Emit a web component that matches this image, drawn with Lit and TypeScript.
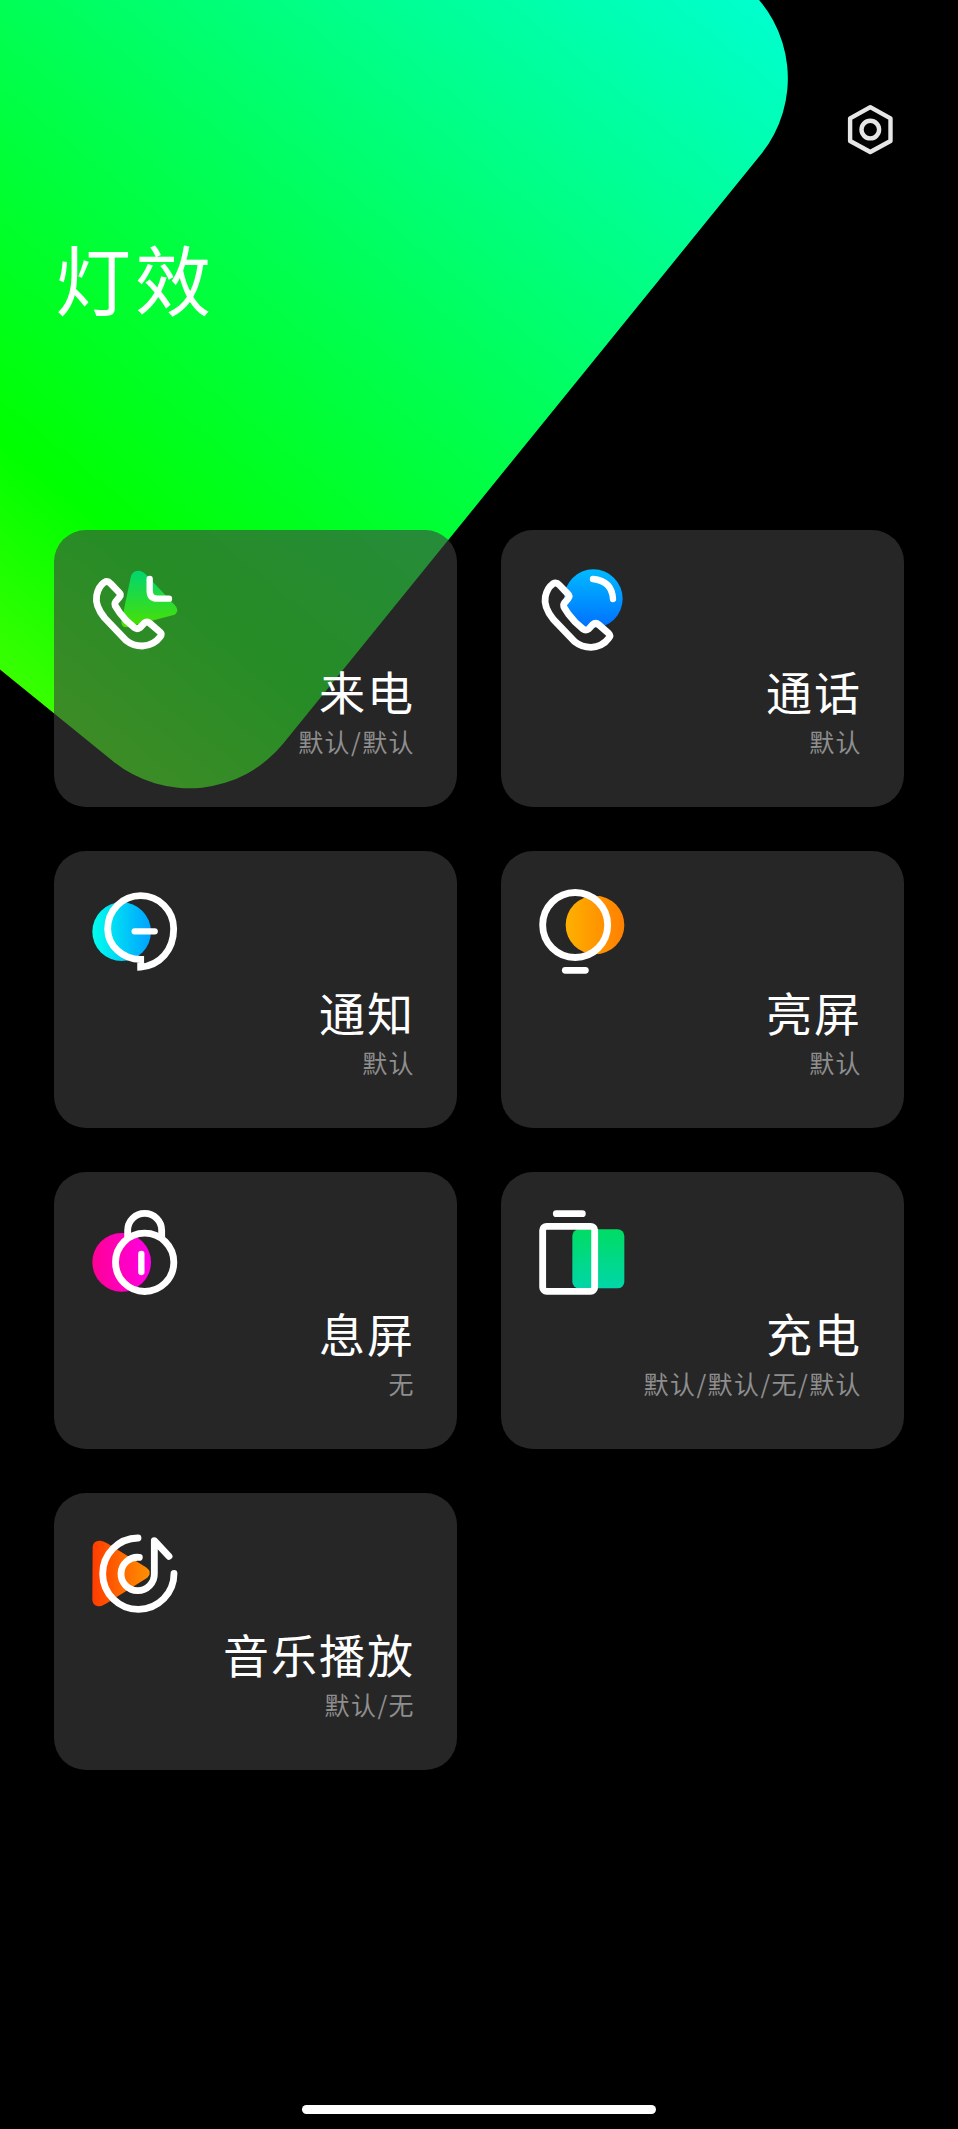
import { LitElement, html, svg, css } from "lit";
import { customElement, property } from "lit/decorators.js";

const phone = (dx: number, dy: number) => svg`
  <g transform="translate(${dx} ${dy})">
    <path class="line" d="M73 67 Q83 61 92 71 L116 96 Q125 104 118 112 L107 125 Q102 132 108 141 L119 158 Q137 183 163 203 Q171 209 180 203 L192 190 Q201 182 210 190 L240 216 Q247 223 240 231 Q222 256 187 258 Q159 258 138 241 L74 174 Q44 137 50 106 Q55 80 73 67 Z"/>
  </g>`;

const icons: Record<string, unknown> = {
  incoming: svg`<svg viewBox="0 0 330 300">
    <defs><linearGradient id="g" x1="0" y1="0" x2="0" y2="1"><stop offset="0" stop-color="#00d670"/><stop offset="1" stop-color="#4be000"/></linearGradient></defs>
    <path fill="url(#g)" d="M153 48 Q158 33 174 32 Q187 32 197 43 L285 136 Q292 144 292 151 Q290 164 278 166 L140 202 Q124 203 124 186 Z"/>
    ${phone(0, 0)}
    <path class="line thin" d="M209 57 V92 Q209 116 233 116 H267"/></svg>`,
  talking: svg`<svg viewBox="-9 0 330 300">
    <defs><linearGradient id="g" x1="0" y1="0" x2="0" y2="1"><stop offset="0" stop-color="#00baff"/><stop offset="1" stop-color="#0070ff"/></linearGradient></defs>
    <circle cx="190" cy="116" r="88" fill="url(#g)"/>
    ${phone(-4, 4)}
    <path class="line thin" d="M189 57 Q246 63 249 117"/></svg>`,
  notice: svg`<svg viewBox="0 3 330 300">
    <defs><linearGradient id="g"><stop offset="0" stop-color="#00ffee"/><stop offset="1" stop-color="#00a2ff"/></linearGradient></defs>
    <circle cx="125" cy="155" r="88" fill="url(#g)"/>
    <path class="line sharp" d="M182 238 C127 238 83 196 83 146 A99 99 0 0 1 281 146 C281 210 240 256 182 261 Z"/>
    <path class="line thin" d="M164 154 H224"/></svg>`,
  screenOn: svg`<svg viewBox="-9 3 330 300">
    <defs><linearGradient id="g"><stop offset="0" stop-color="#ffb000"/><stop offset="1" stop-color="#ff8000"/></linearGradient></defs>
    <circle cx="195" cy="135" r="88" fill="url(#g)"/>
    <circle class="line" cx="135.5" cy="135" r="97.5"/>
    <path class="line" d="M106 271 H166"/></svg>`,
  screenOff: svg`<svg viewBox="0 6 330 300">
    <defs><linearGradient id="g"><stop offset="0" stop-color="#ff0095"/><stop offset="1" stop-color="#ff00e6"/></linearGradient></defs>
    <circle cx="125" cy="187" r="88" fill="url(#g)"/>
    <circle class="line" cx="194" cy="187" r="87.5"/>
    <path class="line" d="M143 112 V91 A51 51 0 0 1 245 91 V112"/>
    <path class="line thin" d="M184 162 V216"/></svg>`,
  charge: svg`<svg viewBox="-9 6 330 300">
    <defs><linearGradient id="g" x1="0" y1="0" x2="0" y2="1"><stop offset="0" stop-color="#00dc64"/><stop offset="1" stop-color="#00d6a8"/></linearGradient></defs>
    <rect x="127" y="88" width="156" height="177" rx="20" fill="url(#g)"/>
    <rect class="line" x="38" y="79" width="156" height="195" rx="12"/>
    <path class="line" d="M79 41 H157"/></svg>`,
  music: svg`<svg viewBox="0 9 330 300">
    <defs><linearGradient id="g"><stop offset="0" stop-color="#ff3c00"/><stop offset="1" stop-color="#ff9100"/></linearGradient></defs>
    <path fill="url(#g)" d="M38 80 Q40 61 60 62 Q70 63 80 69 L198 142 Q219 157 202 173 L80 250 Q65 260 54 259 Q38 256 37 240 Z"/>
    <path class="line" d="M174 54 A107 107 0 1 0 282 160"/>
    <path class="line" d="M178 112 A50 50 0 1 0 223 160 V62 L267 109"/></svg>`,
};

@customElement("effect-card")
export class EffectCard extends LitElement {
  @property() icon = "";
  @property() name = "";
  @property() value = "";

  static styles = css`
    :host {
      display: flex;
      flex-direction: column;
      box-sizing: border-box;
      height: 277px;
      padding: 30px 42px 0 26px;
      border-radius: 32px;
      background: rgba(63, 63, 63, 0.6);
    }
    .icon { width: 110px; height: 100px; }
    .icon svg { display: block; width: 110px; height: 100px; overflow: visible; }
    .line {
      fill: none;
      stroke: #fff;
      stroke-width: 20.5;
      stroke-linecap: round;
      stroke-linejoin: round;
    }
    .thin { stroke-width: 19; }
    .sharp { stroke-linejoin: miter; }
    .name, .value { text-align: right; white-space: nowrap; }
    .name {
      margin-top: -2px;
      font-size: 46px;
      line-height: 64px;
      letter-spacing: 2px;
      color: #fff;
    }
    .value {
      margin-top: 3px;
      font-size: 25px;
      line-height: 32px;
      letter-spacing: 1.4px;
      color: #8e8e8e;
    }
  `;

  render() {
    return html`
      <div class="icon">${icons[this.icon]}</div>
      <div class="name">${this.name}</div>
      <div class="value">${this.value}</div>
    `;
  }
}

@customElement("app-root")
export class AppRoot extends LitElement {
  static styles = css`
    :host {
      display: flex;
      flex-direction: column;
      position: relative;
      box-sizing: border-box;
      height: 2129px;
      overflow: hidden;
      background: #000;
      color: #fff;
      font-family: "Noto Sans CJK SC", sans-serif;
      font-weight: 400;
    }
    .glow { position: absolute; left: 0; top: 0; }
    .bar {
      position: relative;
      display: flex;
      justify-content: flex-end;
      padding: 100px 58px 0 0;
      height: 60px;
    }
    .title {
      position: relative;
      margin: 0;
      padding: 61px 0 0 55px;
      height: 306px;
      font-size: 76px;
      line-height: 112px;
      font-weight: 400;
      letter-spacing: 4px;
      box-sizing: border-box;
    }
    .grid {
      position: relative;
      display: grid;
      grid-template-columns: 403px 403px;
      gap: 44px;
      margin: 64px 0 0 54px;
    }
    .home {
      width: 354px;
      height: 9px;
      margin: auto auto 15px 302px;
      border-radius: 5px;
      background: #fff;
    }
  `;

  private cards = [
    ["incoming", "来电", "默认/默认"],
    ["talking", "通话", "默认"],
    ["notice", "通知", "默认"],
    ["screenOn", "亮屏", "默认"],
    ["screenOff", "息屏", "无"],
    ["charge", "充电", "默认/默认/无/默认"],
    ["music", "音乐播放", "默认/无"],
  ];

  render() {
    return html`
      <svg class="glow" width="958" height="820" viewBox="0 0 958 820">
        <defs>
          <linearGradient id="glow" x1="0" y1="0" x2="0" y2="1">
            <stop offset="0" stop-color="#00ffce" />
            <stop offset="0.82" stop-color="#00ff00" />
            <stop offset="1" stop-color="#38ff00" />
          </linearGradient>
        </defs>
        <rect x="-1000" y="-481" width="1121" height="1000" rx="121" fill="url(#glow)"
          transform="matrix(0.777 0.630 -0.630 0.777 440 358)" />
      </svg>
      <div class="bar">
        <svg width="60" height="60" viewBox="0 0 60 60" fill="none" stroke="#e6e6e6" stroke-width="4.4" stroke-linejoin="round">
          <path d="M30.3 7.2 L50.5 18.4 V41 L30.3 52 L10.1 41 V18.4 Z" />
          <circle cx="30.3" cy="29.6" r="8.8" />
        </svg>
      </div>
      <h1 class="title">灯效</h1>
      <div class="grid">
        ${this.cards.map(([i, n, v]) => html`<effect-card .icon=${i} .name=${n} .value=${v}></effect-card>`)}
      </div>
      <div class="home"></div>
    `;
  }
}
